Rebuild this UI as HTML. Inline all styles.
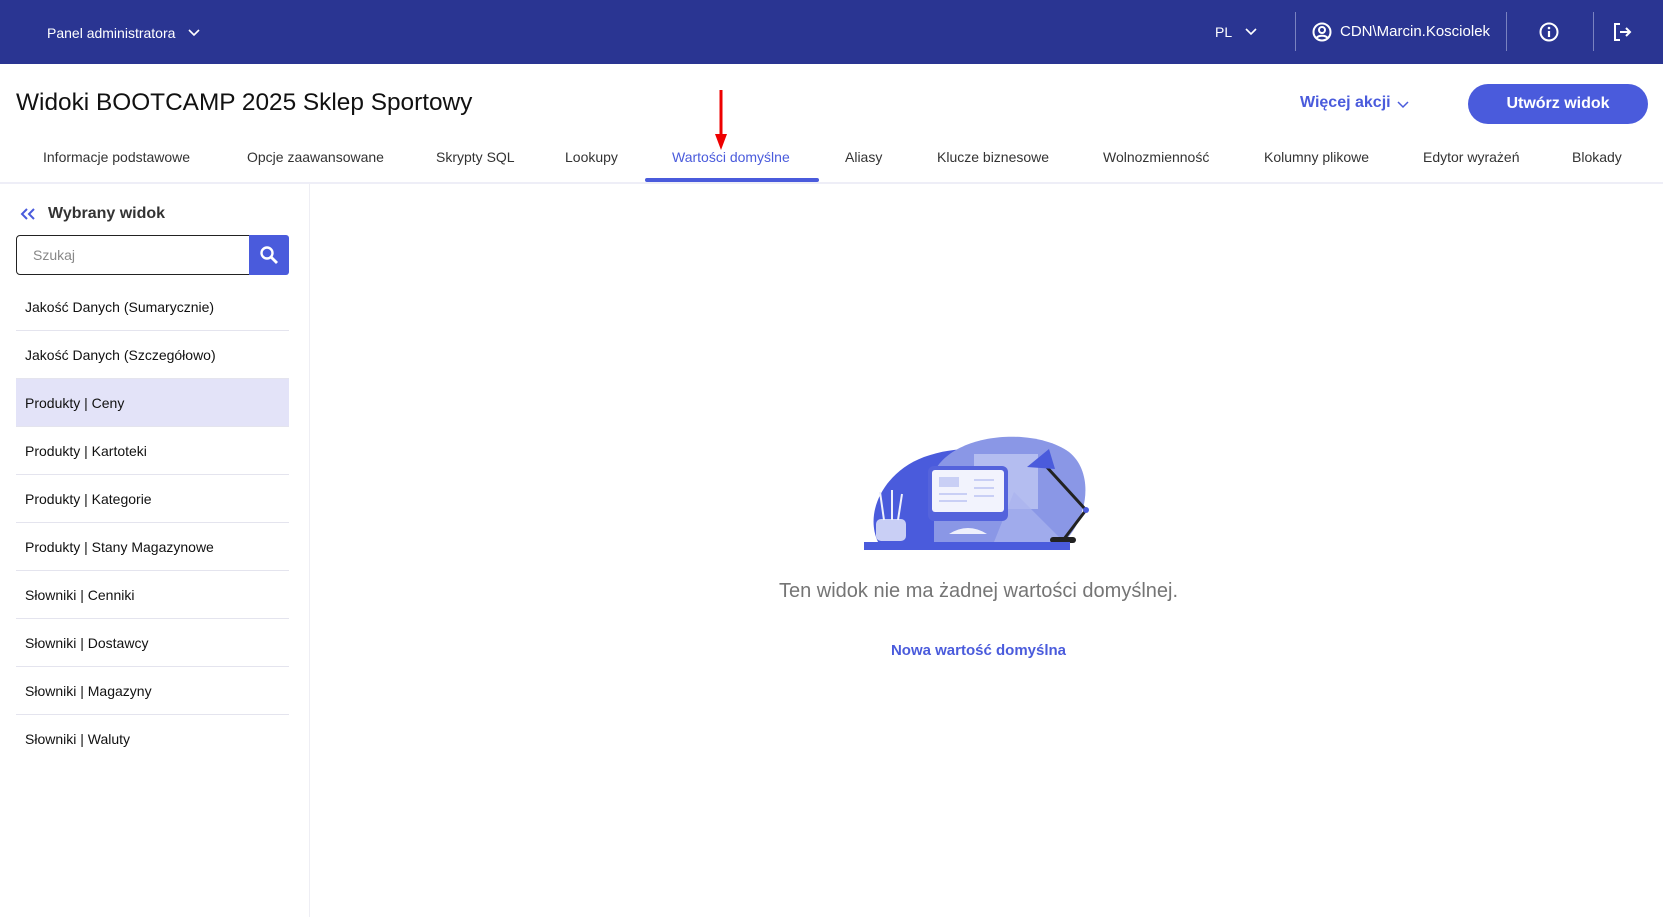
<!DOCTYPE html>
<html><head><meta charset="utf-8"><style>
*{margin:0;padding:0;box-sizing:border-box}
body{width:1663px;height:917px;overflow:hidden;background:#fff;font-family:"Liberation Sans",sans-serif;color:#222;position:relative}
.a{position:absolute;white-space:nowrap}
.hdr{position:absolute;left:0;top:0;width:1663px;height:64px;background:#2a3592}
.hdr .t{color:#fff;font-size:14px}
.sep{position:absolute;top:12px;width:1px;height:39px;background:#7a82c0}
.tab{position:absolute;top:149px;font-size:14px;color:#333}
.row{position:absolute;left:16px;width:273px;height:48px;border-bottom:1px solid #e4e4ee;font-size:14px;color:#111;padding-left:9px;line-height:48px}
</style></head><body>
<div class="hdr">
 <div class="a t" style="left:47px;top:25px">Panel administratora</div>
 <svg class="a" style="left:188px;top:29px" width="12" height="8"><path d="M1 1l5 5 5-5" stroke="#fff" stroke-width="1.6" fill="none"/></svg>
 <div class="a t" style="left:1215px;top:24px">PL</div>
 <svg class="a" style="left:1245px;top:28px" width="12" height="8"><path d="M1 1l5 5 5-5" stroke="#fff" stroke-width="1.6" fill="none"/></svg>
 <div class="sep" style="left:1295px"></div>
 <svg class="a" style="left:1312px;top:22px" width="20" height="20"><circle cx="10" cy="10" r="8.5" stroke="#fff" stroke-width="2" fill="none"/><circle cx="10" cy="8" r="3" stroke="#fff" stroke-width="2" fill="none"/><path d="M4.5 16c2-3 9-3 11 0" stroke="#fff" stroke-width="2" fill="none"/></svg>
 <div class="a t" style="left:1340px;top:23px;font-size:15px">CDN\Marcin.Kosciolek</div>
 <div class="sep" style="left:1506px"></div>
 <svg class="a" style="left:1539px;top:22px" width="20" height="20"><circle cx="10" cy="10" r="8.5" stroke="#fff" stroke-width="2" fill="none"/><path d="M10 9v6" stroke="#fff" stroke-width="2.2"/><circle cx="10" cy="6" r="1.3" fill="#fff"/></svg>
 <div class="sep" style="left:1593px"></div>
 <svg class="a" style="left:1612px;top:22px" width="20" height="20"><path d="M8 2H3v16h5" stroke="#fff" stroke-width="2" fill="none"/><path d="M8 10h10M14 6l4 4-4 4" stroke="#fff" stroke-width="2" fill="none"/></svg>
</div>
<div class="a" style="left:16px;top:89px;font-size:24.4px;color:#111">Widoki BOOTCAMP 2025 Sklep Sportowy</div>
<div class="a" style="left:1300px;top:94px;font-size:16px;color:#4a5bdc;font-weight:bold">Więcej akcji</div>
<svg class="a" style="left:1397px;top:101px" width="12" height="8"><path d="M1 1l5 5 5-5" stroke="#4a5bdc" stroke-width="1.5" fill="none"/></svg>
<div class="a" style="left:1468px;top:84px;width:180px;height:40px;border-radius:20px;background:#4a5bdc;color:#fff;font-size:16px;font-weight:bold;text-align:center;line-height:40px">Utwórz widok</div>
<div class="tab" style="left:43px">Informacje podstawowe</div>
<div class="tab" style="left:247px">Opcje zaawansowane</div>
<div class="tab" style="left:436px">Skrypty SQL</div>
<div class="tab" style="left:565px">Lookupy</div>
<div class="tab" style="left:672px;color:#4a5bdc">Wartości domyślne</div>
<div class="tab" style="left:845px">Aliasy</div>
<div class="tab" style="left:937px">Klucze biznesowe</div>
<div class="tab" style="left:1103px">Wolnozmienność</div>
<div class="tab" style="left:1264px">Kolumny plikowe</div>
<div class="tab" style="left:1423px">Edytor wyrażeń</div>
<div class="tab" style="left:1572px">Blokady</div>
<div class="a" style="left:0;top:182px;width:1663px;height:2px;background:#eeeef7"></div>
<div class="a" style="left:645px;top:178px;width:174px;height:4px;background:#4a5bdc;border-radius:2px"></div>
<svg class="a" style="left:713px;top:88px" width="16" height="64"><path d="M8 2v46" stroke="#e00" stroke-width="3"/><path d="M2 46l6 16 6-16z" fill="#e00"/></svg>
<div class="a" style="left:309px;top:184px;width:1px;height:733px;background:#eeeef4"></div>
<svg class="a" style="left:20px;top:207px" width="16" height="14"><path d="M7 2L2 7l5 5M14 2L9 7l5 5" stroke="#4a5bdc" stroke-width="2" fill="none"/></svg>
<div class="a" style="left:48px;top:205px;font-size:16px;font-weight:bold;color:#333">Wybrany widok</div>
<div class="a" style="left:16px;top:235px;width:235px;height:40px;border:1.5px solid #222;border-radius:4px 0 0 4px;font-size:14px;color:#888;padding:11px 0 0 16px">Szukaj</div>
<div class="a" style="left:249px;top:235px;width:40px;height:40px;background:#4a5bdc;border-radius:0 3px 3px 0"></div>
<svg class="a" style="left:259px;top:245px" width="20" height="20"><circle cx="8" cy="8" r="5.5" stroke="#fff" stroke-width="2.4" fill="none"/><path d="M12 12l6 6" stroke="#fff" stroke-width="2.8"/></svg>
<div class="row" style="top:283px">Jakość Danych (Sumarycznie)</div>
<div class="row" style="top:331px">Jakość Danych (Szczegółowo)</div>
<div class="row" style="top:379px;background:#e3e3f8">Produkty | Ceny</div>
<div class="row" style="top:427px">Produkty | Kartoteki</div>
<div class="row" style="top:475px">Produkty | Kategorie</div>
<div class="row" style="top:523px">Produkty | Stany Magazynowe</div>
<div class="row" style="top:571px">Słowniki | Cenniki</div>
<div class="row" style="top:619px">Słowniki | Dostawcy</div>
<div class="row" style="top:667px">Słowniki | Magazyny</div>
<div class="row" style="top:715px;border-bottom:none">Słowniki | Waluty</div>
<svg class="a" style="left:864px;top:432px" width="230" height="120" viewBox="0 0 230 120">
 <path d="M14 110C0 80 20 40 60 25 90 14 120 16 140 20L140 110Z" fill="#4a5bdc"/>
 <path d="M70 40C90 0 170 -5 205 20 230 40 225 85 200 110L70 110Z" fill="#8a97e6"/>
 <rect x="110" y="22" width="64" height="55" fill="#b4bdf0"/>
 <path d="M150 60l-20 50h70z" fill="#a9b3ee" opacity=".7"/>
 <rect x="64" y="34" width="80" height="55" rx="6" fill="#5463dc"/>
 <rect x="68" y="38" width="72" height="42" rx="3" fill="#f2f3fd"/>
 <rect x="75" y="45" width="20" height="10" fill="#c9cff5"/>
 <path d="M75 62h28M75 69h28M110 48h20M110 56h20M110 64h20" stroke="#c9cff5" stroke-width="2"/>
 <path d="M85 102q19-12 38 0z" fill="#eef0fc"/>
 <rect x="12" y="87" width="30" height="22" rx="5" fill="#c9cff5"/>
 <path d="M20 88l-4-28M28 88v-30M34 88l4-26" stroke="#eef0fc" stroke-width="2"/>
 <path d="M180 32L222 78 200 107" stroke="#222" stroke-width="3" fill="none"/>
 <circle cx="222" cy="78" r="3" fill="#4a5bdc"/>
 <path d="M163 35l22-18 6 20z" fill="#4a5bdc"/>
 <rect x="186" y="105" width="26" height="6" rx="3" fill="#222"/>
 <rect x="0" y="110" width="206" height="8" fill="#4a5bdc"/>
</svg>
<div class="a" style="left:0;width:1957px;top:580px;text-align:center;font-size:20px;color:#757575">Ten widok nie ma żadnej wartości domyślnej.</div>
<div class="a" style="left:0;width:1957px;top:642px;text-align:center;font-size:15px;color:#4a5bdc;font-weight:bold">Nowa wartość domyślna</div>
</body></html>
